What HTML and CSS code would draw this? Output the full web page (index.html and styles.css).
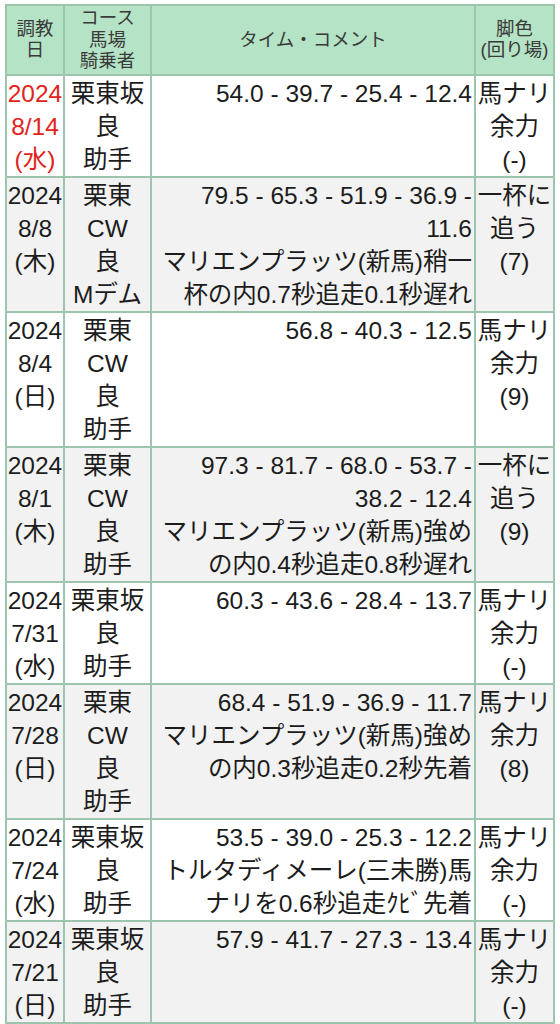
FILE: index.html
```html
<!DOCTYPE html>
<html lang="ja">
<head>
<meta charset="utf-8">
<title>調教</title>
<link rel="stylesheet" href="styles.css">
</head>
<body>
<div class="wrap">
<table class="training">
  <colgroup>
    <col class="c-date">
    <col class="c-course">
    <col class="c-time">
    <col class="c-leg">
  </colgroup>
  <thead>
    <tr>
      <th>調教<br>日</th>
      <th>コース<br>馬場<br>騎乗者</th>
      <th>タイム・コメント</th>
      <th>脚色<br>(回り場)</th>
    </tr>
  </thead>
  <tbody>
    <tr>
      <td class="date recent">2024<br>8/14<br>(水)</td>
      <td class="course">栗東坂<br>良<br>助手</td>
      <td class="time">54.0 - 39.7 - 25.4 - 12.4</td>
      <td class="leg">馬ナリ余力<br>(-)</td>
    </tr>
    <tr>
      <td class="date">2024<br>8/8<br>(木)</td>
      <td class="course">栗東<br>CW<br>良<br>Mデム</td>
      <td class="time">79.5 - 65.3 - 51.9 - 36.9 - 11.6<br>マリエンプラッツ(新馬)稍一杯の内0.7秒追走0.1秒遅れ</td>
      <td class="leg">一杯に追う<br>(7)</td>
    </tr>
    <tr>
      <td class="date">2024<br>8/4<br>(日)</td>
      <td class="course">栗東<br>CW<br>良<br>助手</td>
      <td class="time">56.8 - 40.3 - 12.5</td>
      <td class="leg">馬ナリ余力<br>(9)</td>
    </tr>
    <tr>
      <td class="date">2024<br>8/1<br>(木)</td>
      <td class="course">栗東<br>CW<br>良<br>助手</td>
      <td class="time">97.3 - 81.7 - 68.0 - 53.7 - 38.2 - 12.4<br>マリエンプラッツ(新馬)強めの内0.4秒追走0.8秒遅れ</td>
      <td class="leg">一杯に追う<br>(9)</td>
    </tr>
    <tr>
      <td class="date">2024<br>7/31<br>(水)</td>
      <td class="course">栗東坂<br>良<br>助手</td>
      <td class="time">60.3 - 43.6 - 28.4 - 13.7</td>
      <td class="leg">馬ナリ余力<br>(-)</td>
    </tr>
    <tr>
      <td class="date">2024<br>7/28<br>(日)</td>
      <td class="course">栗東<br>CW<br>良<br>助手</td>
      <td class="time">68.4 - 51.9 - 36.9 - 11.7<br>マリエンプラッツ(新馬)強めの内0.3秒追走0.2秒先着</td>
      <td class="leg">馬ナリ余力<br>(8)</td>
    </tr>
    <tr>
      <td class="date">2024<br>7/24<br>(水)</td>
      <td class="course">栗東坂<br>良<br>助手</td>
      <td class="time">53.5 - 39.0 - 25.3 - 12.2<br>トルタディメーレ(三未勝)馬ナリを0.6秒追走ｸﾋﾞ先着</td>
      <td class="leg">馬ナリ余力<br>(-)</td>
    </tr>
    <tr>
      <td class="date">2024<br>7/21<br>(日)</td>
      <td class="course">栗東坂<br>良<br>助手</td>
      <td class="time">57.9 - 41.7 - 27.3 - 13.4</td>
      <td class="leg">馬ナリ余力<br>(-)</td>
    </tr>
    <tr>
      <td class="date">2024<br>7/18<br>(木)</td>
      <td class="course">栗東<br>CW<br>良<br>助手</td>
      <td class="time">84.0 - 68.2 - 53.1 - 38.0 - 11.9</td>
      <td class="leg">馬ナリ余力<br>(-)</td>
    </tr>
  </tbody>
</table>
</div>
</body>
</html>
```

FILE: styles.css
```css
html, body {
  margin: 0;
  padding: 0;
  background: #ffffff;
}

.wrap {
  padding: 4px 5px 0 5px;
}

.training {
  width: 550px;
  table-layout: fixed;
  border-collapse: collapse;
  font-family: "Liberation Sans", "Noto Sans CJK JP", sans-serif;
  color: #1c1c1c;
}

.c-date { width: 58px; }
.c-course { width: 87px; }
.c-time { width: 324px; }
.c-leg { width: 79px; }

.training th,
.training td {
  border: 2px solid #9dc4ad;
}

.training th {
  background: #b5e3c6;
  color: #3a3a3a;
  font-weight: normal;
  font-size: 18.5px;
  line-height: 21.5px;
  padding: 1px 1px 2px;
  text-align: center;
  vertical-align: middle;
}

.training td {
  font-size: 24.5px;
  line-height: 33px;
  padding: 1px 2px 0;
  vertical-align: top;
  text-align: center;
}

.training tbody tr:nth-child(even) td {
  background: #f2f2f2;
}

.training td.date {
  padding-left: 0;
  padding-right: 0;
}

.training td.recent {
  color: #e0241c;
}

.training td.time {
  text-align: right;
}

.training td.leg {
  padding-left: 0;
  padding-right: 0;
}
```
